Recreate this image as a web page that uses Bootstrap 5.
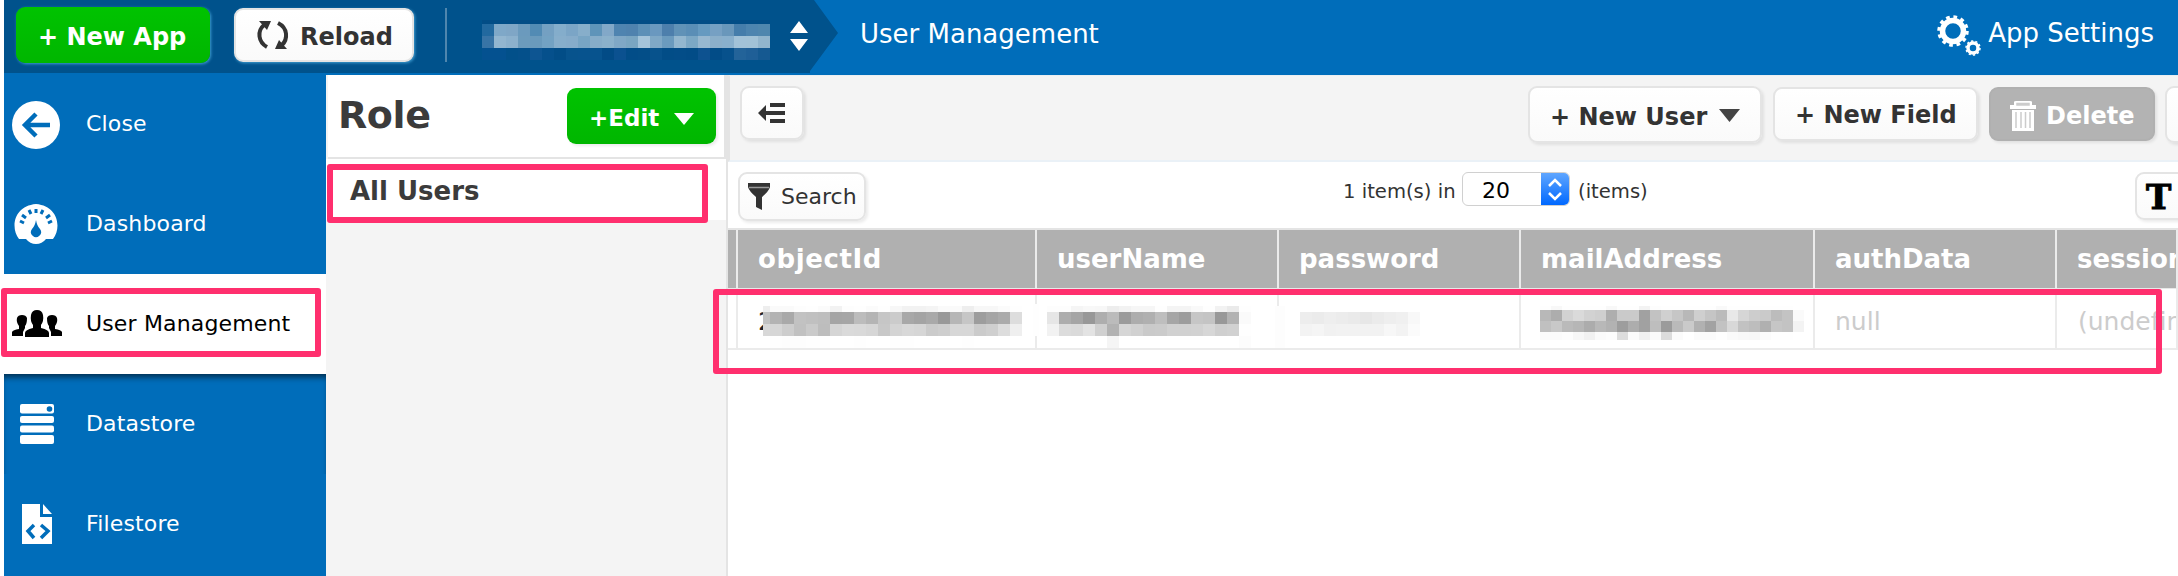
<!DOCTYPE html>
<html lang="en">
<head>
<meta charset="utf-8">
<title>User Management</title>
<link href="https://cdn.jsdelivr.net/npm/bootstrap@5.3.0/dist/css/bootstrap.min.css" rel="stylesheet">
<style>
body{font-family:"DejaVu Sans",sans-serif;font-size:22px;line-height:1.2;color:#333;height:576px;overflow:hidden;background:#fff}
svg{display:block;flex:none}
.ls{white-space:nowrap}
.topbar{height:75px;background:#006dba;margin-left:4px;color:#fff}
.crumb{width:834px;height:73px;background:#00528c;clip-path:polygon(0 0,810px 0,100% 33px,806px 71px,806px 100%,0 100%)}
.xbtn{font-weight:700;font-size:24px;border-radius:9px;padding:0;white-space:nowrap;line-height:1;display:flex;align-items:center;flex:none;color:#333;background:linear-gradient(#fff,#fafafa);border:2px solid #e4e4e4;box-shadow:2px 2px 3px rgba(0,0,0,.08)}
.xbtn.go{background:linear-gradient(#00c300,#00b600);color:#fff;border:0}
.xbtn.off{background:#b3b3b3;color:#fff;border-color:#b0b0b0}
.crumb .xbtn{box-shadow:1px 1px 3px rgba(90,190,240,.7)}
.side{width:322px;margin-left:4px;background:#006dba;color:#fff}
.side a{height:100px;color:#fff;text-decoration:none;padding-left:8px;letter-spacing:.15px}
.side .ico{width:74px}
.side a.on{background:#fff;color:#000;width:324px}
.side a.after{box-shadow:inset 0 6px 6px -3px rgba(0,0,0,.6)}
.roles{width:402px;background:#f4f4f4;border-right:2px solid #e4e4e4}
.rolehead{height:84px;border-bottom:2px solid #e4e4e4;border-right:2px solid #e4e4e4;margin-left:2px}
.tools{height:87px;background:#f4f4f4;border-bottom:2px solid #eaf1f7;border-top:1px solid #e9eef2;border-left:2px solid #e4e4e4}
.filters{height:68px;border-bottom:2px solid #e4e4e4}
.gridrow>div{flex:none;border-right:2px solid #ebebeb;padding-left:20px;white-space:nowrap;overflow:hidden}
.hd{height:59px;border-bottom:1px solid #e8e8e8}
.hd>div{background:#b0b0b0;color:#fff;font-weight:700;font-size:26px;padding-top:2px}
.bd{height:61px;border-bottom:2px solid #ebebeb;color:#ccc;font-size:25px}
.bd>div{padding-top:6px}
.gridrow .c0{width:10px;padding:0}.c1{width:299px}.c2{width:242px}.c3{width:242px}.c4{width:294px}.c5{width:242px}.gridrow .c6{flex:1 1 0;min-width:0}
.mark-box{position:absolute;border:6px solid #ff2f6e;border-radius:3px}
.mosaic{position:absolute}
.sel{width:108px;height:34px;border:1px solid #d0d0d0;border-radius:6px;overflow:hidden;font-size:22px;color:#000}
.sel .arr{width:28px;background:linear-gradient(#5fa6ff,#0068ff)}
.main{min-width:0;overflow:hidden}
</style>
</head>
<body class="position-relative">
<header class="topbar d-flex">
 <div class="crumb d-flex">
  <div class="xbtn go" style="width:194px;height:56px;margin:7px 0 0 12px;padding-left:22px;padding-top:4px"><span class="ls">+ New App</span></div>
  <div class="xbtn" style="width:180px;height:54px;margin:8px 0 0 24px;padding-left:20px">
   <svg width="34" height="28" viewBox="0 0 34 28" fill="none" stroke="#333" stroke-width="4"><path d="M11 26C2 21 1 10 8 4"/><path d="M22 2C32 7 32 18 26 24"/><path d="M3 0H15L11 9Z M31 28H19L23 19Z" fill="#333" stroke="none"/></svg>
   <span class="ls pt-1" style="margin-left:10px">Reload</span></div>
  <div style="width:2px;height:54px;background:#4f86ae;margin:8px 0 0 31px"></div>
  <svg width="18" height="30" viewBox="0 0 18 30" fill="#fff" style="margin:21px 0 0 343px"><path d="M0 12 9 0 18 12ZM0 18H18L9 30Z"/></svg>
 </div>
 <div class="ls" style="font-size:26px;margin:19px 0 0 22px">User Management</div>
 <div class="d-flex ms-auto" style="margin-right:24px">
  <svg width="46" height="42" viewBox="0 0 46 42" fill="none" stroke="#fff" style="margin:15px 6px 0 0"><circle cx="17" cy="16" r="10.500" stroke-width="5.500"/><circle cx="17" cy="16" r="14" stroke-width="3.500" stroke-dasharray="3.665 3.665"/><circle cx="37" cy="33" r="5" stroke-width="3.500"/><circle cx="37" cy="33" r="7" stroke-width="1.500" stroke-dasharray="2.2 2.2"/></svg>
  <span class="ls" style="font-size:26px;margin-top:18px">App Settings</span>
 </div>
</header>
<div class="d-flex" style="height:501px">
 <nav class="side flex-shrink-0">
  <a class="d-flex align-items-center" style="height:99px"><span class="ico"><svg width="48" height="48" viewBox="0 0 48 48"><circle cx="24" cy="24" r="24" fill="#fff"/><path d="M38 24H14M24 13 13 24 24 35" fill="none" stroke="#006dba" stroke-width="4.5"/></svg></span><span class="ls">Close</span></a>
  <a class="d-flex align-items-center"><span class="ico"><svg width="48" height="40" viewBox="0 0 48 40"><path d="M7 35C-2 23 2 2 24 0 46 2 50 23 41 35L34 35Q30 40 24 40T14 35Z" fill="#fff"/><path d="M8 17 12 19M10 11 14 14M17 6 19 10M24 5V9M31 6 29 10M38 11 34 14M40 17 36 19" stroke="#006dba" stroke-width="3"/><path d="M24 16Q25 22 28 25A5 5 0 1 1 20 25Q23 22 24 16Z" fill="#006dba"/></svg></span><span class="ls">Dashboard</span></a>
  <a class="on d-flex align-items-center"><span class="ico"><svg width="50" height="28" viewBox="0 0 50 28" fill="#000"><path d="M13 27V23Q13 20 21 18V15Q18 11 19 5 20 0 25 0T31 5Q32 11 29 15V18Q37 20 37 23V27Z"/><path d="M0 26V22Q1 20 7 19V16Q4 12 5 8 6 5 10 5T15 8Q15 14 13 16V18L11 22V26Z"/><path d="M50 26V22Q49 20 43 19V16Q46 12 45 8 44 5 40 5T35 8Q35 14 37 16V18L39 22V26Z"/></svg></span><span class="ls">User Management</span></a>
  <a class="after d-flex align-items-center"><span class="ico ps-2"><svg width="34" height="40" viewBox="0 0 34 40" fill="#fff"><rect width="34" height="9.500" rx="2"/><rect y="12" width="34" height="7" rx="2"/><rect y="21.500" width="34" height="7" rx="2"/><rect y="31" width="34" height="9" rx="2"/><circle cx="29.500" cy="5" r="2.800" fill="#006dba"/></svg></span><span class="ls">Datastore</span></a>
  <a class="d-flex align-items-center"><span class="ico" style="padding-left:10px"><svg width="30" height="40" viewBox="0 0 30 40"><path d="M0 0H18V13H30V40H0Z" fill="#fff"/><path d="M21 0 30 10H21Z" fill="#fff"/><path d="M12 21 6 27 12 34M19 21 26 27 19 34" fill="none" stroke="#006dba" stroke-width="3.500"/></svg></span><span class="ls">Filestore</span></a>
 </nav>
 <section class="roles flex-shrink-0">
  <div class="rolehead d-flex bg-white">
   <b class="ls" style="font-size:38px;margin:18px 0 0 10px;color:#3b3b3b;letter-spacing:-.4px">Role</b>
   <div class="xbtn go ms-auto" style="width:149px;height:56px;margin:13px 8px 0 0;padding:5px 0 0 22px;font-size:23px"><span class="ls">+Edit</span><svg class="ms-auto" width="20" height="12" viewBox="0 0 20 12" style="margin-right:22px"><path d="M0 0H20L10 12Z" fill="#fff"/></svg></div>
  </div>
  <div class="bg-white" style="height:61px;padding:17px 0 0 24px;font-size:26px"><b class="ls" style="color:#3b3b3b">All Users</b></div>
 </section>
 <main class="main flex-fill">
  <div class="tools d-flex">
   <div class="xbtn justify-content-center" style="width:64px;height:54px;margin:10px 0 0 10px"><svg width="28" height="22" viewBox="0 0 28 22" fill="#333"><path d="M0 11 8 3V19ZM12 1H27V5H12ZM7 9H27V13H7ZM12 17H27V21H12Z"/></svg></div>
   <div class="xbtn" style="width:234px;height:57px;margin:10px 0 0 724px;padding:4px 0 0 20px"><span class="ls">+ New User</span><svg width="21" height="13" viewBox="0 0 21 13" style="margin-left:12px;margin-top:-3px"><path d="M0 0H21L10.500 13Z" fill="#444"/></svg></div>
   <div class="xbtn" style="width:205px;height:54px;margin:11px 0 0 11px;padding:1px 0 0 20px"><span class="ls">+ New Field</span></div>
   <div class="xbtn off" style="width:166px;height:54px;margin:11px 0 0 11px;padding:3px 0 0 19px"><svg width="26" height="30" viewBox="0 0 26 30" fill="#fff"><path d="M0 4H4V1Q4 0 6 0H20Q22 0 22 1V4H26V8H0ZM2 9H24V30H2Z"/><path d="M7 4V2.500H19V4ZM6 11V27M11 11V27M15.500 11V27M20 11V27" stroke="#ccc" stroke-width="1.500"/></svg><span class="ls" style="margin-left:10px">Delete</span></div>
   <div class="xbtn" style="width:60px;height:57px;margin:10px 0 0 10px"></div>
  </div>
  <div class="filters d-flex">
   <div class="xbtn fw-normal" style="width:128px;height:49px;margin:10px 0 0 10px;padding-left:8px"><svg width="22" height="28" viewBox="0 0 22 28" fill="#333"><path d="M0 0H22V4Q21 8 14 14V27L8 24V14Q1 8 0 4Z"/><path d="M1 4.500H21" stroke="#999" stroke-width="1.500"/></svg><span class="ls" style="font-size:22px;margin-left:11px;padding-top:1px">Search</span></div>
   <div class="d-flex" style="margin:10px 0 0 477px;font-size:19.6px"><span class="ls" style="padding-top:8px;width:119px">1 item(s) in</span>
    <div class="sel d-flex"><span class="ls flex-fill" style="padding:5px 0 0 19px">20</span><span class="arr"><svg width="28" height="32" viewBox="0 0 28 32" fill="none" stroke="#fff" stroke-width="2.500"><path d="M8 13 14 7 20 13M8 20 14 26 20 20"/></svg></span></div>
    <span class="ls" style="padding:8px 0 0 8px">(items)</span></div>
   <div class="xbtn ms-auto" style="width:60px;height:48px;margin:10px -17px 0 0;padding:1px 0 0 9px;font:700 34px 'DejaVu Serif',serif;color:#000;-webkit-text-stroke:1px #000">T</div>
  </div>
  <div class="gridrow hd d-flex"><div class="c0"></div><div class="c1 d-flex align-items-center"><span style="letter-spacing:.6px">objectId</span></div><div class="c2 d-flex align-items-center">userName</div><div class="c3 d-flex align-items-center">password</div><div class="c4 d-flex align-items-center">mailAddress</div><div class="c5 d-flex align-items-center">authData</div><div class="c6 d-flex align-items-center">session</div></div>
  <div class="gridrow bd d-flex"><div class="c0"></div><div class="c1 d-flex align-items-center text-dark">2</div><div class="c2"></div><div class="c3"></div><div class="c4"></div><div class="c5 d-flex align-items-center">null</div><div class="c6 d-flex align-items-center" style="padding-left:21px">(undefin</div></div>
 </main>
</div>
<!-- privacy mosaics over the app name and the personal data cells -->
<svg class="mosaic" style="left:0;top:0" width="2178" height="400" id="mosaics" shape-rendering="crispEdges"></svg>
<div class="mark-box" style="left:1px;top:288px;width:320px;height:69px"></div>
<div class="mark-box" style="left:327px;top:164px;width:381px;height:59px"></div>
<div class="mark-box" style="left:713px;top:289px;width:1449px;height:85px"></div>
<script src="https://cdn.jsdelivr.net/npm/bootstrap@5.3.0/dist/js/bootstrap.bundle.min.js"></script>
<script>
const layer = document.getElementById('mosaics');
function cell(x, y, w, h, fill) {
  const r = document.createElementNS('http://www.w3.org/2000/svg', 'rect');
  for (const [k, v] of Object.entries({x, y, width: w, height: h, fill})) r.setAttribute(k, v);
  layer.appendChild(r);
}
// each row: y, height, then one colour per cell
function mosaic(x, w, rows, toColour) {
  for (const [y, h, list] of rows)
    list.split(' ').forEach((c, i) => { if (c !== '--') cell(x + i * w, y, w, h, toColour(c)); });
}
const grey = c => '#' + c + c + c, hex = c => '#' + c;
mosaic(482, 12, [
 [20, 4, Array(24).fill('024d86').join(' ')],
 [24, 12, '22699f 7fa8c8 7fa6c6 6b9abd 528bb4 74a0c2 84adcb 7ba5c6 87aeca 5f94b9 82a8c8 4f84b0 4f82ae 5c90b7 6a98bf 4d7fac 6092b7 5a8eb6 669ac0 76a0c3 6997bb 457dab 4d84af 4f86ae'],
 [36, 12, '3874a6 93b6d0 8cb1cd 6c9bbc 6a9abc 73a2c3 87aecb 86acca 78a5c4 87adc9 8bb1cb 80a8c6 7aa6c2 a4c4da 7fa8c6 6b9bbe 93b7cf 7ca8c5 98b8d0 8bafca 89b0cd a2c2d8 a2c2d7 92b5cd'],
 [48, 12, '045190 045190 02508a 04508b 0d5592 05508c 024d87 07538d 07538e 07538e 024b86 0b5190 024d88 034e88 07528c 024d87 034d88 024c87 0d5290 024c87 07518c 236399 1f5f97 155991']
], hex);
cell(763, 306, 7, 6, '#eee'); cell(763, 312, 7, 12, '#c2c2c2'); cell(763, 324, 7, 12, '#d8d8d8');
mosaic(770, 12, [
 [306, 6, 'fa fa fd fe fb f2 fd fe fb fe f7 f2 f2 f4 fa fa ee f7 f7 fb fe'],
 [312, 12, 'b3 a9 c2 c0 be a5 a6 bc b4 c6 cb a8 a4 a9 99 b6 c6 9d a5 ab dd'],
 [324, 12, 'd6 cd c1 ca bd d5 da d9 d6 c8 d4 d8 d6 cb ce d7 d7 cb cf dd ef'],
 [336, 12, 'fe fd fd fe fe ff ff fe ff ff fe fe ff ff ff ff fe ff ff ff ff']
], grey);
cell(1033, 304, 6, 32, '#fefefe');
mosaic(1047, 12, [
 [306, 6, 'fd fd f5 f8 f7 ed f2 f6 f6 fe f4 f4 f9 fe f2 ea fe'],
 [312, 12, 'e6 ad a5 98 ae bb 9b ad b0 be a6 9d c6 c4 98 b2 fa'],
 [324, 12, 'f2 dc da e3 d0 b2 d6 d1 ca cb d1 d1 d2 d7 cf d1 fe'],
 [336, 12, '-- -- -- -- -- f5 -- -- -- -- -- -- -- -- -- -- fc']
], grey);
cell(1275, 306, 10, 42, '#fdfdfd');
mosaic(1300, 12, [
 [312, 12, 'ed eb ee ec ea e7 eb ee f0 f8'],
 [324, 12, 'f3 f5 f1 f2 f2 f2 f2 f7 f3 fb']
], grey);
mosaic(1540, 11, [
 [306, 4, 'fe f8 fe fe fe fe f8 fe fe f3 fd fe fe fe fe fe f9 fe fe fe fe fe fe'],
 [310, 11, 'b8 ad d2 da d2 cf ae ca ca a1 c2 d0 c6 b8 cf c5 bb e8 d6 cd ca bc c3 fa'],
 [321, 11, 'c0 c8 ba b6 ac b8 b2 9d ad a1 be 9b ba ca b1 a2 c2 d8 c2 bd b0 c6 c3 f3'],
 [332, 8, 'fb fb fd f7 f1 fa fc dd fb f1 fa dc fb ff fb fb fe fa f8 f7 fb fe fe']
], grey);
</script>
</body>
</html>
